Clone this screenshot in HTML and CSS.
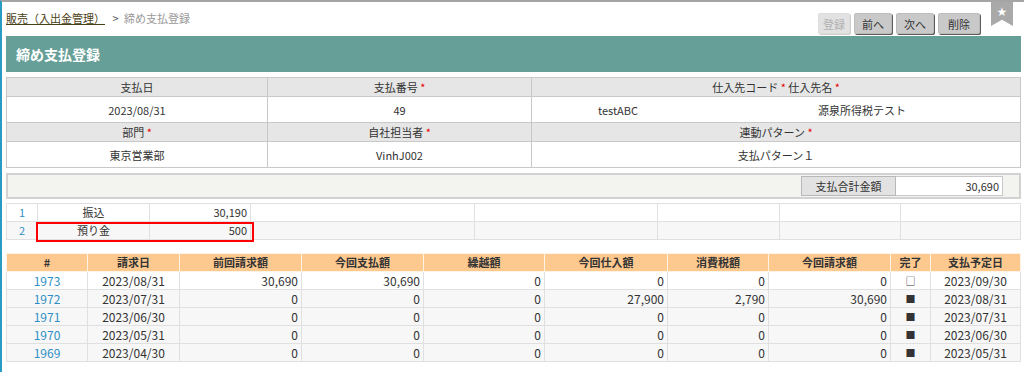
FILE: index.html
```html
<!DOCTYPE html>
<html lang="ja">
<head>
    <meta charset="UTF-8">
    <title>締め支払登録</title>
    <link rel="stylesheet" href="styles.css">
</head>
<body>

<div class="page">
    <div class="topbar">
        <div class="crumbs">
            <a href="#" class="crumb-link">販売（入出金管理）</a>
            <span class="crumb-sep">&gt;</span>
            <span class="crumb-current">締め支払登録</span>
        </div>
        <div class="actions">
            <button type="button" class="btn btn-disabled" disabled>登録</button>
            <button type="button" class="btn">前へ</button>
            <button type="button" class="btn">次へ</button>
            <button type="button" class="btn btn-wide">削除</button>
        </div>
        <div class="bookmark"><span class="star">★</span></div>
    </div>

    <div class="title-bar">締め支払登録</div>

    <!-- ヘッダ情報 -->
    <table class="info">
        <colgroup>
            <col style="width:261px">
            <col style="width:264px">
            <col>
        </colgroup>
        <tr>
            <th>支払日</th>
            <th>支払番号 <span class="req">*</span></th>
            <th>仕入先コード <span class="req">*</span> 仕入先名 <span class="req">*</span></th>
        </tr>
        <tr>
            <td>2023/08/31</td>
            <td>49</td>
            <td class="split">
                <div class="split-row">
                    <span>testABC</span>
                    <span>源泉所得税テスト</span>
                </div>
            </td>
        </tr>
        <tr>
            <th>部門 <span class="req">*</span></th>
            <th>自社担当者 <span class="req">*</span></th>
            <th>連動パターン <span class="req">*</span></th>
        </tr>
        <tr>
            <td>東京営業部</td>
            <td>VinhJ002</td>
            <td>支払パターン１</td>
        </tr>
    </table>

    <div class="total-box">
        <div class="total-label">支払合計金額</div>
        <div class="total-value">30,690</div>
    </div>

    <!-- 支払明細 -->
    <div class="pay-wrap">
        <table class="pay">
            <colgroup>
                <col style="width:31px">
                <col style="width:112px">
                <col style="width:101px">
                <col style="width:224px">
                <col style="width:183px">
                <col style="width:122px">
                <col style="width:121px">
                <col>
            </colgroup>
            <tr>
                <td class="num-link">1</td>
                <td class="center">振込</td>
                <td class="right">30,190</td>
                <td></td><td></td><td></td><td></td><td></td>
            </tr>
            <tr class="alt">
                <td class="num-link">2</td>
                <td class="center">預り金</td>
                <td class="right">500</td>
                <td></td><td></td><td></td><td></td><td></td>
            </tr>
        </table>
        <div class="highlight"></div>
    </div>

    <!-- 請求履歴 -->
    <table class="history">
        <colgroup>
            <col style="width:81px">
            <col style="width:92px">
            <col style="width:122px">
            <col style="width:122px">
            <col style="width:121px">
            <col style="width:123px">
            <col style="width:101px">
            <col style="width:122px">
            <col style="width:40px">
            <col>
        </colgroup>
        <tr>
            <th>#</th>
            <th>請求日</th>
            <th>前回請求額</th>
            <th>今回支払額</th>
            <th>繰越額</th>
            <th>今回仕入額</th>
            <th>消費税額</th>
            <th>今回請求額</th>
            <th>完了</th>
            <th>支払予定日</th>
        </tr>
        <tr>
            <td class="num-link">1973</td>
            <td class="center">2023/08/31</td>
            <td class="right">30,690</td>
            <td class="right">30,690</td>
            <td class="right">0</td>
            <td class="right">0</td>
            <td class="right">0</td>
            <td class="right">0</td>
            <td class="center mark">□</td>
            <td class="center">2023/09/30</td>
        </tr>
        <tr class="alt">
            <td class="num-link">1972</td>
            <td class="center">2023/07/31</td>
            <td class="right">0</td>
            <td class="right">0</td>
            <td class="right">0</td>
            <td class="right">27,900</td>
            <td class="right">2,790</td>
            <td class="right">30,690</td>
            <td class="center mark">■</td>
            <td class="center">2023/08/31</td>
        </tr>
        <tr class="alt">
            <td class="num-link">1971</td>
            <td class="center">2023/06/30</td>
            <td class="right">0</td>
            <td class="right">0</td>
            <td class="right">0</td>
            <td class="right">0</td>
            <td class="right">0</td>
            <td class="right">0</td>
            <td class="center mark">■</td>
            <td class="center">2023/07/31</td>
        </tr>
        <tr class="alt">
            <td class="num-link">1970</td>
            <td class="center">2023/05/31</td>
            <td class="right">0</td>
            <td class="right">0</td>
            <td class="right">0</td>
            <td class="right">0</td>
            <td class="right">0</td>
            <td class="right">0</td>
            <td class="center mark">■</td>
            <td class="center">2023/06/30</td>
        </tr>
        <tr class="alt">
            <td class="num-link">1969</td>
            <td class="center">2023/04/30</td>
            <td class="right">0</td>
            <td class="right">0</td>
            <td class="right">0</td>
            <td class="right">0</td>
            <td class="right">0</td>
            <td class="right">0</td>
            <td class="center mark">■</td>
            <td class="center">2023/05/31</td>
        </tr>
    </table>
</div>

</body>
</html>
```

FILE: styles.css
```css
body {
    margin: 0;
    font-family: "Noto Sans CJK JP", "Noto Sans", sans-serif;
    font-size: 11px;
    color: #333;
    background: #fff;
    border-top: 2px solid #a5a5a5;
    border-left: 2px solid #2a9bc2;
    min-height: 372px;
    box-sizing: border-box;
}

.page {
    padding: 0 3px 0 4px;
}

/* 上部バー */
.topbar {
    height: 34px;
    display: flex;
    align-items: flex-start;
}

.crumbs {
    flex: 1;
    padding-top: 8px;
    line-height: 16px;
}

.crumb-link {
    color: #4a4016;
    text-decoration: underline;
}

.crumb-sep {
    color: #555;
    margin: 0 3px 0 5px;
}

.crumb-current {
    color: #999;
}

.actions {
    display: flex;
    gap: 4px;
    padding-top: 11px;
}

.btn {
    height: 21px;
    padding: 0 7px;
    font-family: inherit;
    font-size: 11px;
    color: #333;
    background: #c9c9c9;
    border: 1px solid #bcbcbc;
    border-radius: 2px;
    box-shadow: 1px 1px 0 #5a5a5a;
    line-height: 18px;
}

.btn-wide {
    padding: 0 9px;
}

.btn-disabled {
    padding: 0 4px;
    color: #b0b0b0;
    background: #e2e2e2;
    border-color: #dcdcdc;
    box-shadow: 1px 1px 0 #cfcfcf;
}

.bookmark {
    width: 22px;
    height: 26px;
    margin: -2px 8px 0 11px;
    background: #a9a9a9;
    clip-path: polygon(0 0, 100% 0, 100% 100%, 50% 76%, 0 100%);
    text-align: center;
}

.star {
    color: #fff;
    font-family: "DejaVu Sans", sans-serif;
    font-size: 12px;
    line-height: 24px;
}

/* タイトル */
.title-bar {
    height: 36px;
    line-height: 36px;
    padding-left: 10px;
    background: #669f98;
    color: #fff;
    font-size: 14px;
    font-weight: bold;
}

/* テーブル共通 */
table {
    width: 100%;
    border-collapse: collapse;
    table-layout: fixed;
}

th, td {
    padding: 0 3px;
    font-weight: normal;
    white-space: nowrap;
}

.center { text-align: center; }
.right { text-align: right; }

.num-link {
    text-align: center;
    color: #2f8fc4;
}

.req {
    color: #e60000;
}

/* ヘッダ情報 */
.info {
    margin-top: 5px;
    border: 1px solid #c8c8c8;
}

.info th {
    height: 18px;
    background: #e6e6e6;
    border: 1px solid #c8c8c8;
    text-align: center;
}

.info td {
    height: 25px;
    border: 1px solid #c8c8c8;
    text-align: center;
}

.info td.split {
    padding: 0;
}

.split-row {
    display: grid;
    grid-template-columns: 172px 1fr;
    text-align: center;
}

/* 合計 */
.total-box {
    margin-top: 5px;
    height: 22px;
    display: flex;
    justify-content: flex-end;
    align-items: center;
    padding-right: 16px;
    background: #f3f3ef;
    border: 2px solid #d2d2d2;
}

.total-label {
    width: 93px;
    height: 18px;
    line-height: 18px;
    text-align: center;
    background: #e2e2e2;
    border: 1px solid #b8b8b8;
}

.total-value {
    width: 103px;
    height: 18px;
    line-height: 18px;
    padding-right: 3px;
    text-align: right;
    background: #fff;
    border: 1px solid #c8c8c8;
    border-left: none;
}

/* 支払明細 */
.pay-wrap {
    position: relative;
    margin-top: 4px;
}

.pay td {
    height: 17px;
    line-height: 17px;
    border: 1px solid #e0e0e0;
    background: #fff;
}

.pay tr.alt td,
.history tr.alt td {
    background: #f7f7f7;
}

/* 赤枠 */
.highlight {
    position: absolute;
    left: 30px;
    top: 19px;
    width: 214px;
    height: 16px;
    border: 2px solid #ff0000;
}

/* 請求履歴 */
.history {
    margin-top: 13px;
}

.history th {
    height: 17px;
    line-height: 17px;
    background: #fec98f;
    font-weight: bold;
    text-align: center;
    border: 1px solid #fff3e6;
}

.history td {
    height: 17px;
    line-height: 17px;
    border: 1px solid #e0e0e0;
    background: #fff;
    font-size: 12px;
}

.history td.mark {
    font-size: 10px;
}
```
